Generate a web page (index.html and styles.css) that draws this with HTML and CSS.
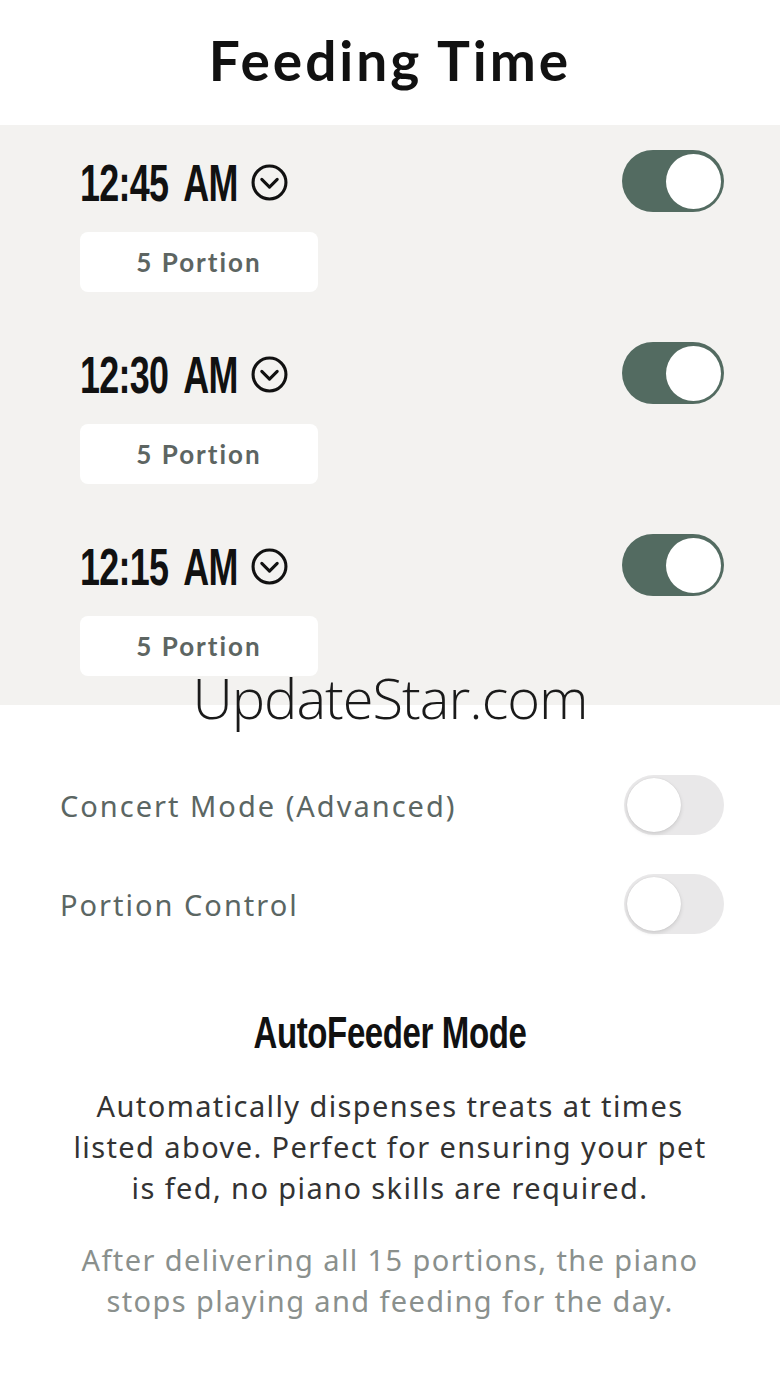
FILE: index.html
```html
<!DOCTYPE html>
<html lang="en">
<head>
  <meta charset="UTF-8" />
  <title>Feeding Time</title>
  <meta name="viewport" content="width=device-width, initial-scale=1.0" />
  <link rel="stylesheet" href="styles.css">
</head>
<body>

  <h1 class="title">Feeding Time</h1>

  <section class="schedule">
    <div class="feed-row">
      <div class="feed-info">
        <div class="feed-time">
          <span class="time-text">12:45 AM</span>
          <svg class="check-icon" viewBox="0 0 36 36"><circle cx="18" cy="18" r="16" /><path d="M10.5 15 L18 22.5 L25.5 15" /></svg>
        </div>
        <button class="portion-btn">5 Portion</button>
      </div>
      <div class="toggle on"><span class="knob"></span></div>
    </div>

    <div class="feed-row">
      <div class="feed-info">
        <div class="feed-time">
          <span class="time-text">12:30 AM</span>
          <svg class="check-icon" viewBox="0 0 36 36"><circle cx="18" cy="18" r="16" /><path d="M10.5 15 L18 22.5 L25.5 15" /></svg>
        </div>
        <button class="portion-btn">5 Portion</button>
      </div>
      <div class="toggle on"><span class="knob"></span></div>
    </div>

    <div class="feed-row">
      <div class="feed-info">
        <div class="feed-time">
          <span class="time-text">12:15 AM</span>
          <svg class="check-icon" viewBox="0 0 36 36"><circle cx="18" cy="18" r="16" /><path d="M10.5 15 L18 22.5 L25.5 15" /></svg>
        </div>
        <button class="portion-btn">5 Portion</button>
      </div>
      <div class="toggle on"><span class="knob"></span></div>
    </div>

    <div class="watermark">UpdateStar.com</div>
  </section>

  <section class="settings">
    <div class="setting-row">
      <span class="setting-label">Concert Mode (Advanced)</span>
      <div class="toggle"><span class="knob"></span></div>
    </div>
    <div class="setting-row">
      <span class="setting-label">Portion Control</span>
      <div class="toggle"><span class="knob"></span></div>
    </div>
  </section>

  <section class="mode-info">
    <h2>AutoFeeder Mode</h2>
    <p>Automatically dispenses treats at times listed above. Perfect for ensuring your pet is fed, no piano skills are required.</p>
    <p class="note">After delivering all 15 portions, the piano stops playing and feeding for the day.</p>
  </section>

</body>
</html>
```

FILE: styles.css
```css
body {
  margin: 0;
  background: #ffffff;
  font-family: "Noto Sans", "Open Sans", sans-serif;
}

.title {
  margin: 0;
  height: 125px;
  line-height: 120px;
  text-align: center;
  font-family: Lato, "Noto Sans", sans-serif;
  font-size: 55px;
  font-weight: 700;
  letter-spacing: 3px;
  color: #111;
}

.schedule {
  position: relative;
  background: #f3f2f0;
  padding: 28px 56px 29px 80px;
  display: flex;
  flex-direction: column;
  gap: 53px;
}

.feed-row {
  display: flex;
  justify-content: space-between;
  align-items: flex-start;
}

.feed-info {
  display: flex;
  flex-direction: column;
  gap: 19px;
}

.feed-time {
  height: 60px;
  display: flex;
  align-items: center;
  gap: 14px;
}

/* condensed look: no narrow face installed, so squeeze the bold sans */
.time-text {
  display: inline-block;
  font-family: "Liberation Sans", Arial, sans-serif;
  font-weight: 700;
  font-size: 52px;
  letter-spacing: -1px;
  word-spacing: 10px;
  color: #111;
  transform: scaleX(0.69);
  transform-origin: left center;
  margin-right: -71px;
}

.check-icon {
  width: 37px;
  height: 37px;
  margin-top: -2px;
  fill: none;
  stroke: #111;
  stroke-width: 3;
  stroke-linecap: round;
  stroke-linejoin: round;
}

.portion-btn {
  width: 238px;
  height: 60px;
  border: none;
  border-radius: 8px;
  background: #ffffff;
  font-family: Lato, "Open Sans", sans-serif;
  font-weight: 700;
  font-size: 26px;
  letter-spacing: 2px;
  color: #5d6562;
  padding: 0;
}

.toggle {
  width: 100px;
  height: 60px;
  border-radius: 30px;
  background: #e9e8e9;
  display: flex;
  align-items: center;
  padding: 0 3px;
  box-sizing: border-box;
}

.toggle .knob {
  width: 54px;
  height: 54px;
  border-radius: 50%;
  background: #ffffff;
  box-shadow: 0 2px 4px rgba(0, 0, 0, 0.12), 0 0 1px rgba(0, 0, 0, 0.15);
}

.toggle.on {
  margin-top: -3px;
  width: 102px;
  height: 62px;
  border-radius: 31px;
  background: #536b61;
  justify-content: flex-end;
}

.toggle.on .knob {
  width: 55px;
  height: 55px;
  box-shadow: none;
}

.watermark {
  position: absolute;
  left: 0;
  right: 0;
  top: 552px;
  text-align: center;
  font-family: "Open Sans", sans-serif;
  font-weight: 300;
  font-size: 56px;
  line-height: 40px;
  color: #1a1a1a;
  letter-spacing: -1px;
}

.settings {
  padding: 70px 56px 0 60px;
  display: flex;
  flex-direction: column;
  gap: 39px;
}

.setting-row {
  display: flex;
  justify-content: space-between;
  align-items: center;
}

.setting-label {
  font-size: 29px;
  color: #5b6663;
  letter-spacing: 2px;
}

.mode-info {
  padding: 74px 65px 0;
  text-align: center;
}

.mode-info h2 {
  margin: 0 0 27px;
  font-family: "Liberation Sans", Arial, sans-serif;
  font-weight: 700;
  font-size: 44px;
  line-height: 50px;
  letter-spacing: -0.5px;
  color: #111;
  transform: scaleX(0.75);
}

.mode-info p {
  margin: 0 0 31px;
  font-size: 29px;
  line-height: 41px;
  letter-spacing: 1.4px;
  color: #333;
}

.mode-info p.note {
  color: #8a908d;
}
```
